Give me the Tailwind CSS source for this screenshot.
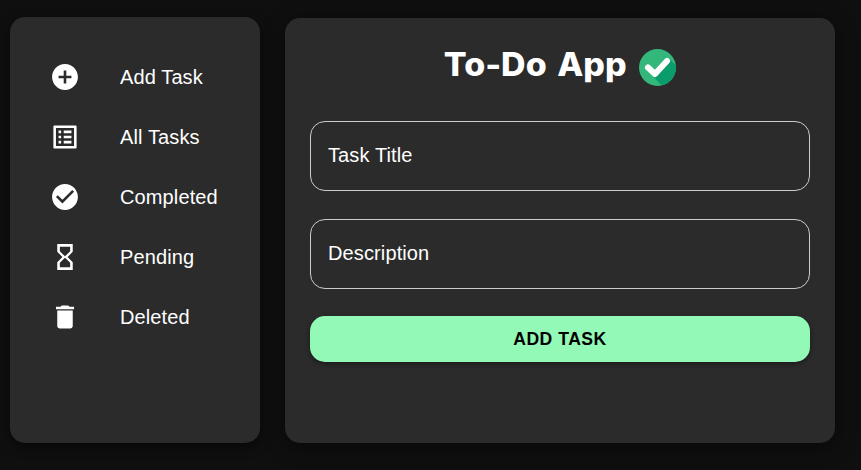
<!DOCTYPE html>
<html lang="en">
<head>
<meta charset="utf-8">
<title>To-Do App</title>
<script src="https://cdn.jsdelivr.net/npm/@tailwindcss/browser@4"></script>
</head>
<body class="flex h-[470px] items-start gap-[25px] overflow-hidden bg-[#0f0f0f] pl-[10px] pt-[17px] font-['Liberation_Sans',Arial,sans-serif] text-white">
<nav class="h-[426px] w-[250px] shrink-0 rounded-[15px] bg-[#2b2b2b] pl-[39px] pt-[30px] shadow-[0_4px_12px_rgba(0,0,0,0.5)]">
  <ul class="text-[20px] leading-[60px] tracking-[0.12px]">
    <li class="flex h-[60px] items-center gap-[39px]"><svg class="size-8 shrink-0" viewBox="-0.4 -0.4 24.8 24.8" fill="currentColor"><path d="M12 2C6.480 2 2 6.480 2 12s4.480 10 10 10 10-4.480 10-10S17.520 2 12 2zm5 11h-4v4h-2v-4H7v-2h4V7h2v4h4v2z"/></svg>Add Task</li>
    <li class="flex h-[60px] items-center gap-[39px]"><svg class="size-8 shrink-0" viewBox="-0.4 -0.4 24.8 24.8" fill="currentColor"><path d="M19 5v14H5V5h14m1.100-2H3.900c-.5 0-.9.4-.9.9v16.200c0 .4.4.9.9.9h16.200c.4 0 .9-.5.9-.9V3.900c0-.5-.5-.9-.9-.9zM11 7h6v2h-6V7zm0 4h6v2h-6v-2zm0 4h6v2h-6v-2zM7 7h2v2H7V7zm0 4h2v2H7v-2zm0 4h2v2H7v-2z"/></svg>All Tasks</li>
    <li class="flex h-[60px] items-center gap-[39px]"><svg class="size-8 shrink-0" viewBox="-0.4 -0.4 24.8 24.8" fill="currentColor"><path d="M12 2C6.480 2 2 6.480 2 12s4.480 10 10 10 10-4.480 10-10S17.520 2 12 2zm-2 15-5-5 1.410-1.410L10 14.170l7.590-7.590L19 8l-9 9z"/></svg>Completed</li>
    <li class="flex h-[60px] items-center gap-[39px]"><svg class="size-8 shrink-0" viewBox="-0.4 -0.4 24.8 24.8" fill="currentColor"><path d="M6 2v6h.01L6 8.010 10 12l-4 4 .01.010H6V22h12v-5.990h-.01L18 16l-4-4 4-3.990-.01-.010H18V2H6zm10 14.500V20H8v-3.500l4-4 4 4zm-4-5-4-4V4h8v3.500l-4 4z"/></svg>Pending</li>
    <li class="flex h-[60px] items-center gap-[39px]"><svg class="size-8 shrink-0" viewBox="-0.4 -0.4 24.8 24.8" fill="currentColor"><path d="M6 19c0 1.100.9 2 2 2h8c1.100 0 2-.9 2-2V7H6v12zM19 4h-3.500l-1-1h-5l-1 1H5v2h14V4z"/></svg>Deleted</li>
  </ul>
</nav>
<main class="mt-px h-[425px] w-[550px] shrink-0 rounded-[15px] bg-[#2b2b2b] px-[25px] pt-[24px] shadow-[0_4px_20px_rgba(0,0,0,0.5)]">
  <h1 class="flex h-[50px] items-center justify-center gap-[13px] font-['Inter',sans-serif] text-[32px] font-extrabold leading-[40px]"><span class="-mt-[4px] flex w-[182px] justify-center whitespace-nowrap"><span class="inline-block scale-x-[1.06] [word-spacing:3px]">To-Do App</span></span><svg class="size-[37px] shrink-0" viewBox="0 0 37 37"><circle cx="18.500" cy="18.500" r="18.500" fill="#33b77b"/><path fill="#0a9d6b" d="M30.500 10 36.900 16.500A18.500 18.500 0 0 1 22.500 36.500L14 27z"/><path d="m9 18.500 7 6.500L28 12" fill="none" stroke="#fff" stroke-width="6" stroke-linejoin="round" stroke-linecap="round"/></svg></h1>
  <form class="mt-[29px] text-[20px] tracking-[0.12px]">
    <input class="block h-[70px] w-full rounded-[15px] border border-[#ccc] px-[17px] pb-[1px] text-white outline-none placeholder:text-white placeholder:opacity-100" placeholder="Task Title">
    <input class="mt-[28px] block h-[70px] w-full rounded-[15px] border border-[#ccc] px-[17px] pb-[1px] text-white outline-none placeholder:text-white placeholder:opacity-100" placeholder="Description">
    <button type="button" class="mt-[27px] flex h-[46px] w-full items-center justify-center rounded-[15px] bg-[#92fab6] text-[17.600px] font-bold tracking-[0.5px] text-black shadow-[0_2px_5px_rgba(0,0,0,0.4)]">ADD TASK</button>
  </form>
</main>
</body>
</html>
